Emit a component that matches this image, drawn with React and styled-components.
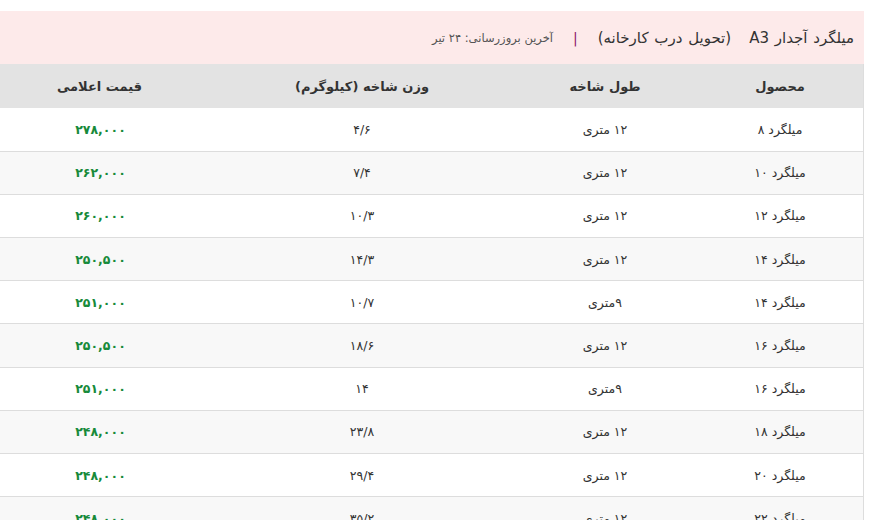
import styled, { createGlobalStyle } from 'styled-components'

const GlobalStyle = createGlobalStyle`
    body {
        margin: 0;
        padding-top: 11px;
        background: #fff;
        font-family: "DejaVu Sans", "Noto Sans", sans-serif;
    }
`

const Wrapper = styled.section`
    width: 864px;
    direction: rtl;
`

const TitleBar = styled.div`
    background: #fdeaea;
    height: 53px;
    display: flex;
    align-items: center;
    gap: 18px;
    padding-right: 10px;
    color: #333;
`

const Title = styled.h2`
    margin: 0;
    font-size: 15px;
    font-weight: normal;
    word-spacing: 1px;
`

const Divider = styled.span`
    color: #8b1a6b;
    font-size: 14px;
    padding: 0 2px;
`

const Updated = styled.span`
    font-size: 11.5px;
    color: #555;
`

const Table = styled.table`
    width: 100%;
    border-collapse: collapse;
    border-right: 1px solid #ddd;
    font-size: 12.5px;
    color: #333;
`

const HeadCell = styled.th`
    background: #e3e3e3;
    height: 44px;
    font-weight: bold;
    font-size: 13px;
    text-align: center;
    width: ${props => props.w || 'auto'};
    padding: 0 ${props => props.pr || '0'} 0 0;
`

const Row = styled.tr`
    height: 43.2px;
    background: ${props => (props.odd ? '#f8f8f8' : '#fff')};
    border-bottom: 1px solid #ddd;
`

const Cell = styled.td`
    text-align: center;
    padding: 0;
`

const Price = styled(Cell)`
    color: #178a3a;
    font-weight: bold;
    padding-right: 10px;
`

const ROWS = [
    ['میلگرد ۸', '۱۲ متری', '۴/۶', '۲۷۸,۰۰۰'],
    ['میلگرد ۱۰', '۱۲ متری', '۷/۴', '۲۶۲,۰۰۰'],
    ['میلگرد ۱۲', '۱۲ متری', '۱۰/۳', '۲۶۰,۰۰۰'],
    ['میلگرد ۱۴', '۱۲ متری', '۱۴/۳', '۲۵۰,۵۰۰'],
    ['میلگرد ۱۴', '۹متری', '۱۰/۷', '۲۵۱,۰۰۰'],
    ['میلگرد ۱۶', '۱۲ متری', '۱۸/۶', '۲۵۰,۵۰۰'],
    ['میلگرد ۱۶', '۹متری', '۱۴', '۲۵۱,۰۰۰'],
    ['میلگرد ۱۸', '۱۲ متری', '۲۳/۸', '۲۴۸,۰۰۰'],
    ['میلگرد ۲۰', '۱۲ متری', '۲۹/۴', '۲۴۸,۰۰۰'],
    ['میلگرد ۲۲', '۱۲ متری', '۳۵/۲', '۲۴۸,۰۰۰'],
]

export default function App() {
    return (
        <Wrapper>
            <GlobalStyle />
            <TitleBar>
                <Title>میلگرد آجدار A3</Title>
                <Title>(تحویل درب کارخانه)</Title>
                <Divider>|</Divider>
                <Updated>آخرین بروزرسانی: ۲۴ تیر</Updated>
            </TitleBar>
            <Table>
                <thead>
                    <tr>
                        <HeadCell w="166px">محصول</HeadCell>
                        <HeadCell w="184px">طول شاخه</HeadCell>
                        <HeadCell w="302px">وزن شاخه (کیلوگرم)</HeadCell>
                        <HeadCell pr="12px">قیمت اعلامی</HeadCell>
                    </tr>
                </thead>
                <tbody>
                    {ROWS.map((r, i) => (
                        <Row key={i} odd={i % 2 === 1}>
                            <Cell>{r[0]}</Cell>
                            <Cell>{r[1]}</Cell>
                            <Cell>{r[2]}</Cell>
                            <Price>{r[3]}</Price>
                        </Row>
                    ))}
                </tbody>
            </Table>
        </Wrapper>
    )
}
